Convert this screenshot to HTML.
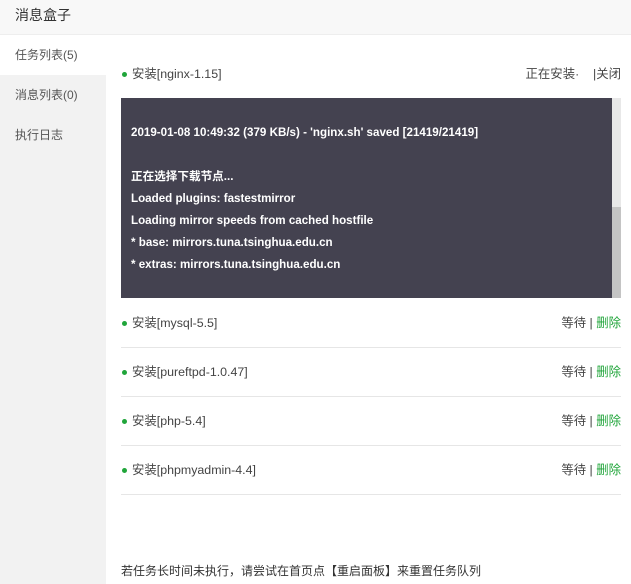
<!DOCTYPE html>
<html><head><meta charset="utf-8"><style>
*{margin:0;padding:0;box-sizing:border-box}
body{width:631px;height:584px;background:#fff;font-family:"Liberation Sans","Noto Sans CJK SC",sans-serif;font-size:12px;color:#333;position:relative;overflow:hidden}
.hd{position:absolute;left:0;top:0;width:631px;height:35px;background:#f8f8f8;border-bottom:1px solid #eee;font-size:14px;line-height:30px;padding-left:15px;color:#333}
.sb{position:absolute;left:0;top:35px;width:106px;height:549px;background:#f2f2f2}
.sb div{height:40px;line-height:40px;padding-left:15px;font-size:12px;color:#555}
.sb .on{background:#fff}
.row{position:absolute;left:121px;width:500px;height:49px;line-height:49px;border-bottom:1px solid #e6e6e6;padding-left:11px;font-size:12.4px;color:#444}
.row:before{content:"";position:absolute;left:1px;top:22px;width:5px;height:5px;border-radius:50%;background:#20a53a}
.row .r{position:absolute;right:0;top:0}
.g{color:#20a53a}
.term{position:absolute;left:121px;top:98px;width:500px;height:200px;background:#444250;color:#fff;font-weight:bold;font-size:11.6px;padding:24px 10px;line-height:22px}
.sc{position:absolute;left:612px;top:98px;width:9px;height:200px;background:#e8e8e8}
.sc i{position:absolute;left:0;top:109px;width:9px;height:91px;background:#c4c4c4}
.ft{position:absolute;left:121px;top:562px;font-size:12px;color:#333}
</style></head><body>
<div class="hd">消息盒子</div>
<div class="sb"><div class="on">任务列表(5)</div><div>消息列表(0)</div><div>执行日志</div></div>
<div class="row" style="top:50px;border:none">安装[nginx-1.15]<span class="r">正在安装·&nbsp;&nbsp;&nbsp;&nbsp;|关闭</span></div>
<div class="term">2019-01-08 10:49:32 (379 KB/s) - 'nginx.sh' saved [21419/21419]<br><br>正在选择下载节点...<br>Loaded plugins: fastestmirror<br>Loading mirror speeds from cached hostfile<br>* base: mirrors.tuna.tsinghua.edu.cn<br>* extras: mirrors.tuna.tsinghua.edu.cn</div>
<div class="sc"><i></i></div>
<div class="row" style="top:299px">安装[mysql-5.5]<span class="r">等待 | <span class="g">删除</span></span></div>
<div class="row" style="top:348px">安装[pureftpd-1.0.47]<span class="r">等待 | <span class="g">删除</span></span></div>
<div class="row" style="top:397px">安装[php-5.4]<span class="r">等待 | <span class="g">删除</span></span></div>
<div class="row" style="top:446px">安装[phpmyadmin-4.4]<span class="r">等待 | <span class="g">删除</span></span></div>
<div class="ft">若任务长时间未执行，请尝试在首页点【重启面板】来重置任务队列</div>
</body></html>
